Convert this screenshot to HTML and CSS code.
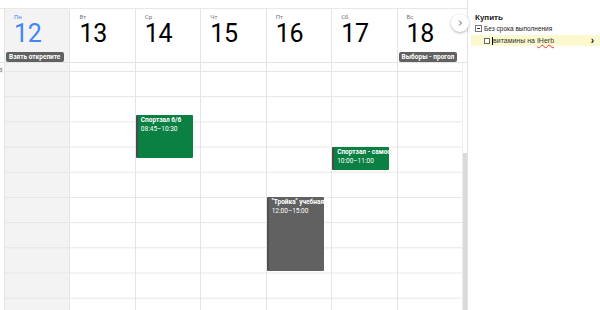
FILE: index.html
```html
<!DOCTYPE html>
<html lang="ru">
  <head>
    <meta charset="UTF-8" />
    <title>Календарь</title>
    <link rel="stylesheet" href="styles.css">
  </head>
  <body>
    <div class="app">
      <div class="cal">
        <div class="head">
          <div class="gutter"></div>
          <div class="day today">
            <span class="dname">Пн</span>
            <span class="dnum">12</span>
            <span class="badge">Взять открепите</span>
          </div>
          <div class="day"><span class="dname">Вт</span><span class="dnum">13</span></div>
          <div class="day"><span class="dname">Ср</span><span class="dnum">14</span></div>
          <div class="day"><span class="dname">Чт</span><span class="dnum">15</span></div>
          <div class="day"><span class="dname">Пт</span><span class="dnum">16</span></div>
          <div class="day"><span class="dname">Сб</span><span class="dnum">17</span></div>
          <div class="day">
            <span class="dname">Вс</span>
            <span class="dnum">18</span>
            <span class="badge">Выборы - прогол</span>
          </div>
          <div class="gap"></div>
        </div>

        <div class="grid">
          <div class="gutter"><span class="hour">3</span></div>
          <div class="col today"></div>
          <div class="col"></div>
          <div class="col">
            <div class="event green" style="top: 52px; height: 43px;">
              <b>Спортзал 6/6</b>
              <span>08:45–10:30</span>
            </div>
          </div>
          <div class="col"></div>
          <div class="col">
            <div class="event grey" style="top: 134px; height: 74px;">
              <b>"Тройка" учебная</b>
              <span>12:00–15:00</span>
            </div>
          </div>
          <div class="col">
            <div class="event green" style="top: 84px; height: 23px;">
              <b>Спортзал - самост</b>
              <span>10:00–11:00</span>
            </div>
          </div>
          <div class="col"></div>
          <div class="scroll"><div class="thumb"></div></div>
        </div>

        <button class="next">
          <svg width="8" height="8" viewBox="0 0 8 8"><path d="M3 1.5 L5.5 4 L3 6.5" fill="none" stroke="#5f6368" stroke-width="1"/></svg>
        </button>
      </div>

      <aside class="tasks">
        <h3>Купить</h3>
        <div class="group">
          <svg width="7" height="7" viewBox="0 0 7 7"><rect x="0.5" y="0.5" width="6" height="6" fill="#fff" stroke="#777"/><path d="M2 3.5 H5" stroke="#333"/></svg>
          Без срока выполнения
        </div>
        <div class="task">
          <span class="box"></span>
          <span class="caret"></span>
          <span class="ttext">витамины на <u>IHerb</u></span>
          <span class="go">›</span>
        </div>
      </aside>
    </div>
  </body>
</html>
```

FILE: styles.css
```css
* {
  margin: 0;
  padding: 0;
  box-sizing: border-box;
}
body {
  width: 600px;
  height: 310px;
  overflow: hidden;
  background: #fff;
  font-family: Roboto, "Liberation Sans", Arial, sans-serif;
  color: #202124;
}
.app {
  display: flex;
  height: 310px;
}
.cal {
  position: relative;
  width: 468px;
  padding-top: 8px;
  display: flex;
  flex-direction: column;
  border-right: 1px solid #e2e2e2;
}
.head,
.grid {
  display: grid;
  grid-template-columns: 4px repeat(7, 1fr) 5px;
}
.head {
  height: 55px;
  border-top: 1px solid #e8e8e8;
  border-bottom: 1px solid #e4e4e4;
}
.grid {
  flex: 1;
}
.day {
  display: flex;
  flex-direction: column;
  border-left: 1px solid #e4e4e4;
  padding: 4px 0 0 9px;
}
.today {
  background-color: #f3f3f3;
}
.dname {
  font-size: 6px;
  line-height: 8px;
  color: #70757a;
}
.dnum {
  font-size: 25px;
  line-height: 26px;
  color: #000;
  letter-spacing: -0.3px;
}
.today .dname,
.today .dnum {
  color: #4285f4;
}
.badge {
  margin: 5px 0 0 -8px;
  width: 58px;
  height: 10px;
  background: #616161;
  color: #fff;
  font-size: 6.5px;
  font-weight: 700;
  line-height: 10px;
  padding-left: 3px;
  border-radius: 2px;
  white-space: nowrap;
  overflow: hidden;
}
.day:last-of-type .badge {
  margin-top: 5px;
}
.gutter {
  position: relative;
}
.hour {
  position: absolute;
  top: 4px;
  left: -2px;
  font-size: 6px;
  line-height: 6px;
  color: #70757a;
  background: #f3f3f3;
  padding: 0 1px;
}
.col {
  position: relative;
  border-left: 1px solid #e4e4e4;
  background-image: linear-gradient(#e6e6e6 1px, transparent 1px);
  background-size: 100% 25.2px;
  background-position: 0 8px;
}
.scroll {
  border-left: 1px solid #ededed;
  padding-top: 90px;
}
.thumb {
  height: 100%;
  background: #dadada;
}
.event {
  position: absolute;
  left: 0;
  width: 89%;
  padding: 1px 0 0 3px;
  display: flex;
  flex-direction: column;
  color: #fff;
  font-size: 6.5px;
  line-height: 9px;
  white-space: nowrap;
  overflow: hidden;
  border-left: 2px solid #4a4a4a;
  border-radius: 1px;
}
.event b {
  font-weight: 700;
}
.green {
  background: #0b8043;
}
.grey {
  background: #616161;
  border-left-color: #505050;
}
.next {
  position: absolute;
  top: 14px;
  left: 451px;
  width: 18px;
  height: 18px;
  border: none;
  border-radius: 50%;
  background: #fff;
  box-shadow: 0 1px 3px rgba(0, 0, 0, 0.3);
  display: flex;
  align-items: center;
  justify-content: center;
}
.tasks {
  flex: 1;
  padding: 13px 0 0 3px;
  font-family: "Liberation Sans", Arial, sans-serif;
}
.tasks h3 {
  font-size: 8px;
  font-weight: 700;
  color: #222;
  padding-left: 4px;
  line-height: 10px;
}
.group {
  display: flex;
  align-items: center;
  gap: 2px;
  font-size: 6.5px;
  color: #222;
  padding-left: 4px;
  height: 10px;
}
.task {
  margin-top: 2px;
  height: 11px;
  background: #fdf9cf;
  display: flex;
  align-items: center;
  padding-left: 13px;
  font-size: 7px;
  color: #333;
}
.box {
  width: 6px;
  height: 6px;
  border: 1px solid #666;
  background: #fff;
  margin-right: 2px;
}
.caret {
  width: 1px;
  height: 8px;
  background: #000;
}
.ttext u {
  text-decoration: underline wavy #e33;
  text-underline-offset: 1px;
}
.go {
  margin-left: auto;
  margin-right: 6px;
  font-size: 10px;
  font-weight: 700;
  color: #111;
  line-height: 10px;
}
```
